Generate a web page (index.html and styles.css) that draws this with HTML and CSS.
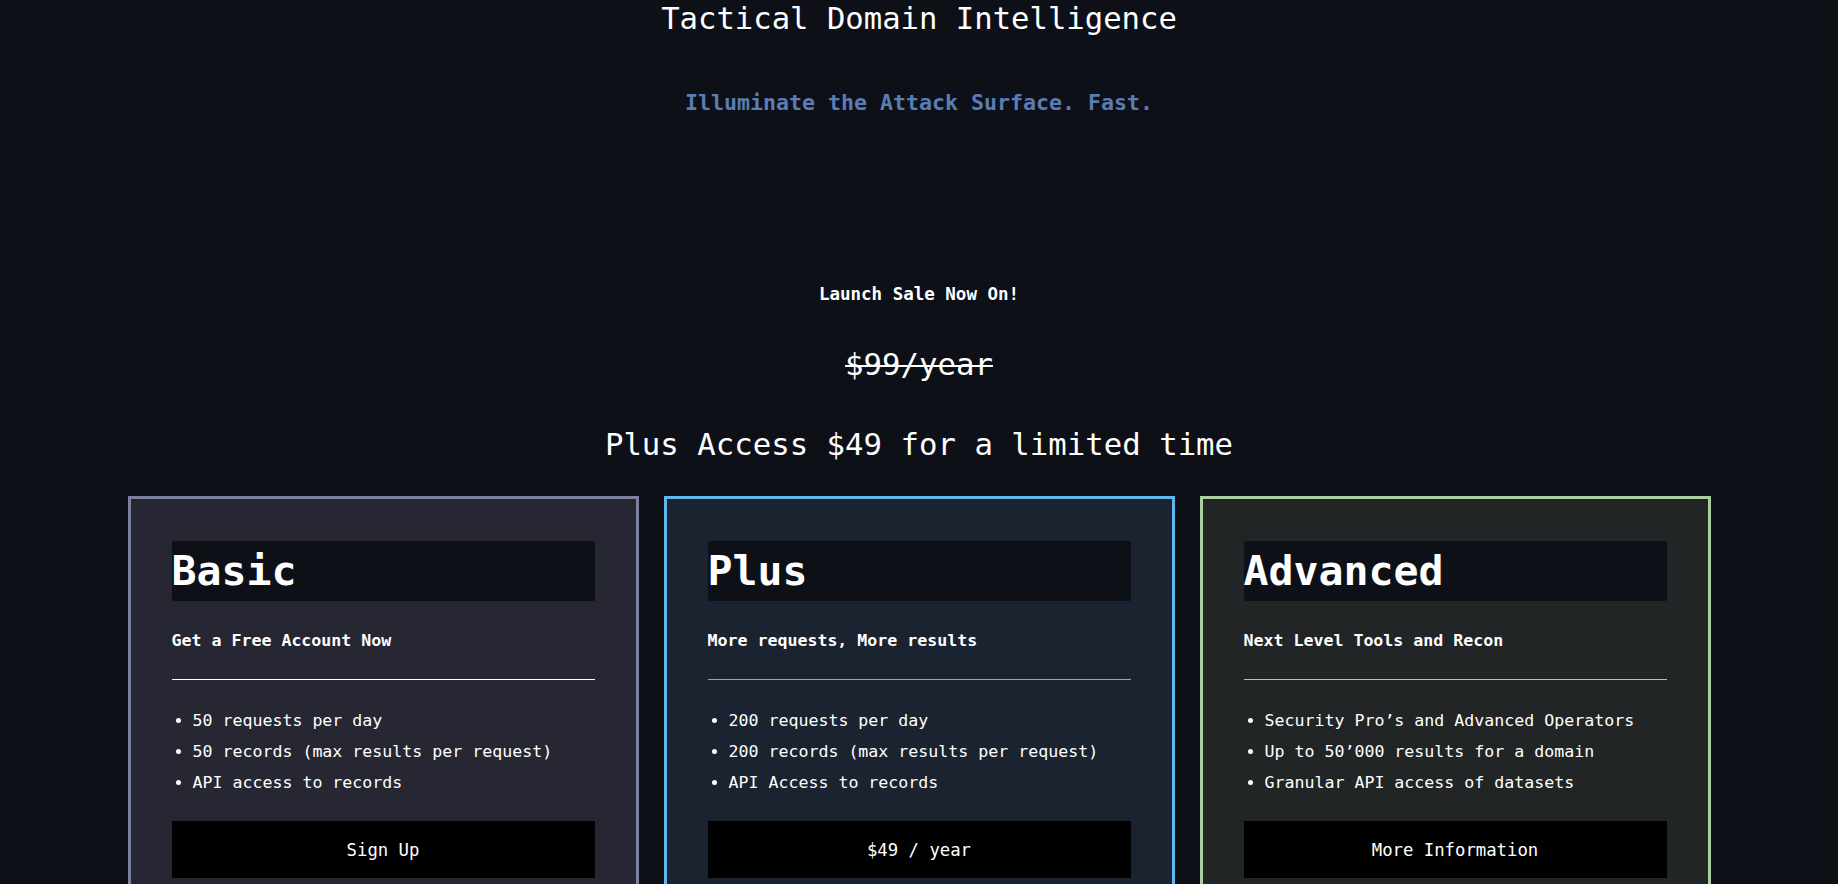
FILE: index.html
```html
<!DOCTYPE html>
<html lang="en">
<head>
<meta charset="utf-8">
<title>Tactical Domain Intelligence</title>
<link rel="stylesheet" href="styles.css">
</head>
<body>
<header class="hero">
  <h1 class="hero-title">Tactical Domain Intelligence</h1>
  <p class="hero-tagline">Illuminate the Attack Surface. Fast.</p>
</header>
<section class="sale">
  <p class="sale-label">Launch Sale Now On!</p>
  <p class="sale-old">$99/year</p>
  <p class="sale-offer">Plus Access $49 for a limited time</p>
</section>
<section class="plans">
  <article class="plan plan-basic">
    <h2 class="plan-name">Basic</h2>
    <p class="plan-sub">Get a Free Account Now</p>
    <hr class="plan-rule">
    <ul class="plan-list">
      <li>50 requests per day</li>
      <li>50 records (max results per request)</li>
      <li>API access to records</li>
    </ul>
    <a class="plan-btn" href="#">Sign Up</a>
  </article>
  <article class="plan plan-plus">
    <h2 class="plan-name">Plus</h2>
    <p class="plan-sub">More requests, More results</p>
    <hr class="plan-rule">
    <ul class="plan-list">
      <li>200 requests per day</li>
      <li>200 records (max results per request)</li>
      <li>API Access to records</li>
    </ul>
    <a class="plan-btn" href="#">$49 / year</a>
  </article>
  <article class="plan plan-advanced">
    <h2 class="plan-name">Advanced</h2>
    <p class="plan-sub">Next Level Tools and Recon</p>
    <hr class="plan-rule">
    <ul class="plan-list">
      <li>Security Pro’s and Advanced Operators</li>
      <li>Up to 50’000 results for a domain</li>
      <li>Granular API access of datasets</li>
    </ul>
    <a class="plan-btn" href="#">More Information</a>
  </article>
</section>
</body>
</html>
```

FILE: styles.css
```css
* { box-sizing: border-box; }

html, body {
  margin: 0;
  padding: 0;
  background: #0e1018;
  color: #ffffff;
  font-family: "DejaVu Sans Mono", "Liberation Mono", monospace;
}

.hero {
  display: flex;
  flex-direction: column;
  align-items: center;
  padding-top: 1px;
}

.hero-title {
  margin: 0;
  font-size: 30.6px;
  line-height: 36px;
  font-weight: normal;
}

.hero-tagline {
  margin: 53px 0 0;
  font-size: 21.6px;
  line-height: 26px;
  font-weight: bold;
  color: #5a7db3;
}

.sale {
  display: flex;
  flex-direction: column;
  align-items: center;
  margin-top: 168px;
}

.sale-label {
  margin: 0;
  font-size: 17.5px;
  line-height: 20px;
  font-weight: bold;
}

.sale-old {
  margin: 43px 0 0;
  font-size: 30.7px;
  line-height: 36px;
  text-decoration: line-through;
  text-decoration-thickness: 2px;
}

.sale-offer {
  margin: 44px 0 0;
  font-size: 30.7px;
  line-height: 36px;
}

.plans {
  display: flex;
  justify-content: center;
  gap: 25px;
  margin-top: 33px;
}

.plan {
  width: 511px;
  border: 3px solid #7b809e;
  background: #262733;
  padding: 42px 41px 40px;
  display: flex;
  flex-direction: column;
}

.plan-plus {
  border-color: #62b6ee;
  background: #1b2330;
}

.plan-advanced {
  border-color: #a9cf9f;
  background: #212526;
}

.plan-name {
  margin: 0;
  height: 60px;
  background: #0e1018;
  border-radius: 2px;
  font-size: 41.5px;
  line-height: 60px;
  font-weight: bold;
}

.plan-sub {
  margin: 30px 0 0;
  font-size: 16.6px;
  line-height: 20px;
  font-weight: bold;
}

.plan-rule {
  margin: 28px 0 0;
  border: 0;
  height: 1px;
  background: #ffffff;
}

.plan-plus .plan-rule { background: #62b6ee; }
.plan-advanced .plan-rule { background: #a9cf9f; }

.plan-list {
  margin: 25px 0 0;
  padding-left: 21px;
  font-size: 16.6px;
  line-height: 31px;
}

.plan-btn {
  margin-top: 23px;
  height: 57px;
  display: flex;
  align-items: center;
  justify-content: center;
  background: #000000;
  color: #ffffff;
  text-decoration: none;
  font-size: 17.3px;
}
```
